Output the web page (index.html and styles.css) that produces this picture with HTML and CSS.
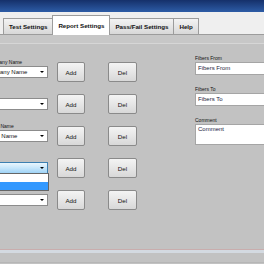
FILE: index.html
```html
<!DOCTYPE html>
<html lang="en">
<head>
  <meta charset="UTF-8" />
  <meta name="viewport" content="width=device-width, initial-scale=1.0"/>
  <title>Report Settings</title>
  <link rel="stylesheet" href="styles.css">
</head>
<body>
  <div class="titlebar"></div>

  <div class="tabs">
    <div class="tab">Test Settings</div>
    <div class="tab active">Report Settings</div>
    <div class="tab">Pass/Fail Settings</div>
    <div class="tab">Help</div>
  </div>
  <div class="subbar"></div>

  <div class="panel">
    <div class="lists">
      <div class="row">
        <div class="field">
          <div class="label">Company Name</div>
          <div class="select">Company Name</div>
        </div>
        <button class="btn add">Add</button>
        <button class="btn del">Del</button>
      </div>

      <div class="row">
        <div class="field">
          <div class="label"></div>
          <div class="select"></div>
        </div>
        <button class="btn add">Add</button>
        <button class="btn del">Del</button>
      </div>

      <div class="row">
        <div class="field">
          <div class="label">Cable Name</div>
          <div class="select">Cable Name</div>
        </div>
        <button class="btn add">Add</button>
        <button class="btn del">Del</button>
      </div>

      <div class="row">
        <div class="field">
          <div class="label"></div>
          <div class="select open">
            <div class="dropdown">
              <div class="option"></div>
              <div class="option hover"></div>
            </div>
          </div>
        </div>
        <button class="btn add">Add</button>
        <button class="btn del">Del</button>
      </div>

      <div class="row">
        <div class="field">
          <div class="label"></div>
          <div class="select"></div>
        </div>
        <button class="btn add">Add</button>
        <button class="btn del">Del</button>
      </div>
    </div>

    <div class="fields">
      <div class="label">Fibers From</div>
      <div class="input">Fibers From</div>
      <div class="label">Fibers To</div>
      <div class="input">Fibers To</div>
      <div class="label">Comment</div>
      <div class="input comment">Comment</div>
    </div>
  </div>

  <div class="footer"></div>
</body>
</html>
```

FILE: styles.css
```css
* {
  margin: 0;
  padding: 0;
  box-sizing: border-box;
}

body {
  width: 264px;
  height: 264px;
  overflow: hidden;
  display: flex;
  flex-direction: column;
  font-family: 'Liberation Sans', Arial, sans-serif;
  background: #c2c2c2;
  color: #111;
}

.titlebar {
  height: 12px;
  flex-shrink: 0;
  background: linear-gradient(#15306a, #2d5ca6);
}

.tabs {
  height: 23px;
  flex-shrink: 0;
  display: flex;
  align-items: flex-end;
  padding-left: 3px;
  background: #efefef;
  box-shadow: inset 0 -1px #9c9c9c;
}

.tab {
  height: 16px;
  margin-bottom: 1px;
  margin-right: -1px;
  padding: 0 5px;
  display: flex;
  align-items: center;
  font-size: 6.2px;
  font-weight: bold;
  border: 1px solid #9c9c9c;
  border-bottom: none;
  background: linear-gradient(#f3f3f3, #d8d8d8);
}

.tab.active {
  height: 20px;
  margin-bottom: 0;
  background: #fff;
  position: relative;
  z-index: 1;
}

.subbar {
  height: 9px;
  flex-shrink: 0;
  background: #c7c7c7;
  border-bottom: 1px solid #d6d6d6;
}

.panel {
  flex: 1;
  display: flex;
  padding-top: 11px;
}

.lists {
  margin-left: -20px;
  margin-top: 3px;
}

.row {
  display: flex;
  align-items: flex-start;
  height: 24px;
  margin-bottom: 8px;
}

.field {
  width: 68px;
}

.label {
  height: 8px;
  line-height: 8px;
  padding-left: 6px;
  font-size: 5px;
}

.select {
  position: relative;
  height: 12px;
  line-height: 10px;
  padding-left: 3px;
  font-size: 6px;
  background: #fff;
  border: 1px solid #8c8c8c;
}

.select::after {
  content: "";
  position: absolute;
  right: 3px;
  top: 4px;
  border-left: 2px solid transparent;
  border-right: 2px solid transparent;
  border-top: 2px solid #000;
}

.select.open {
  border-color: #3c7fb1;
  background: linear-gradient(#eaf6fd, #c6e6fb 50%, #9fd3f6);
}

.dropdown {
  position: absolute;
  top: 10px;
  left: -1px;
  right: -2px;
  border: 1px solid #666;
  background: #fff;
}

.option {
  height: 8px;
}

.option.hover {
  background: #3399ff;
}

.btn {
  width: 28px;
  height: 20px;
  margin-top: 4px;
  margin-left: 9px;
  font-family: inherit;
  font-size: 6.2px;
  color: #111;
  border: 1px solid #8a8a8a;
  border-radius: 2px;
  background: linear-gradient(#f4f4f4, #e6e6e6 50%, #d8d8d8);
}

.btn.del {
  width: 29px;
  margin-left: 23px;
}

.fields {
  width: 90px;
  flex-shrink: 0;
  margin-left: 58px;
}

.fields .label {
  height: 7px;
  line-height: 7px;
  padding-left: 0;
}

.input {
  height: 13px;
  line-height: 11px;
  padding-left: 2px;
  margin-bottom: 11px;
  font-size: 6px;
  color: #1c1c40;
  background: #fff;
  border: 1px solid #a5a5a5;
}

.input.comment {
  height: 21px;
  line-height: 9px;
}

.footer {
  height: 15px;
  flex-shrink: 0;
  border-top: 1px solid #c9adad;
  background: linear-gradient(#d4dae1 0 3px, #c2c2c2 3px, #c2c2c2 12px, #b6b6b6 12px, #b6b6b6 13px, #c2c2c2 13px);
}
```
